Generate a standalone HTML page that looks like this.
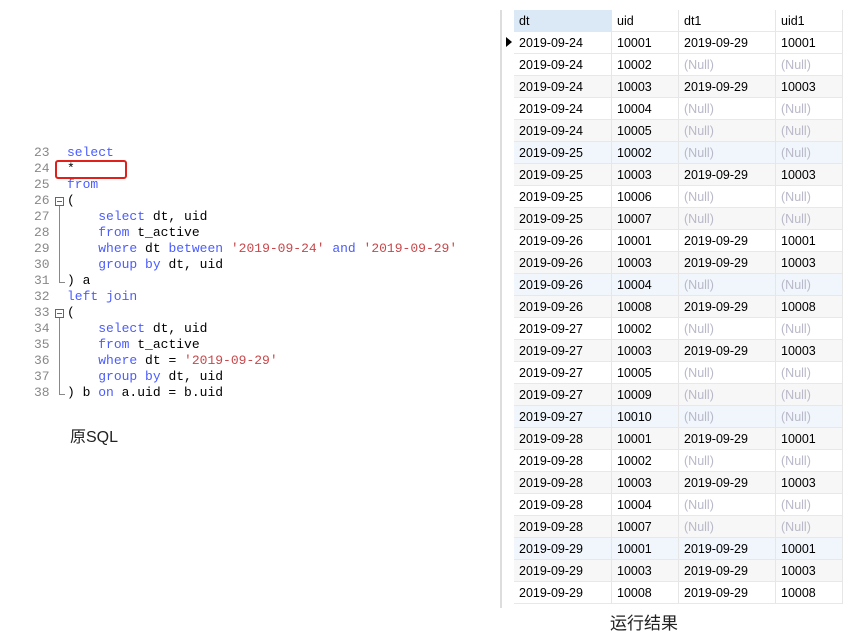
<!DOCTYPE html><html><head><meta charset="utf-8"><style>
body{margin:0;width:849px;height:635px;background:#fff;position:relative;overflow:hidden;font-family:"Liberation Sans","Noto Sans CJK SC",sans-serif}
.code{position:absolute;left:0;top:145px;font:13px/16px "Liberation Mono",monospace;color:#000}
.ln{position:absolute;left:34px;color:#888;width:20px}
.l{position:absolute;left:67px;white-space:pre}
.k{color:#4a5cff}.s{color:#c9474a}
.box{position:absolute;left:55px;top:160px;width:72px;height:19px;border:2px solid #e0201a;border-radius:3px;box-sizing:border-box}
.tbl{position:absolute;left:500px;top:10px;width:341px;border-left:2px solid #ddd;height:598px}
.r{position:absolute;left:12px;height:22px;width:329px;font-size:12.5px;line-height:22px;border-bottom:1px solid #e8e8e8;box-sizing:border-box}
.c{position:absolute;top:0;height:22px;padding-left:5px;border-right:1px solid #e6e6e6;box-sizing:border-box}
.n{color:#b8b8c8}
</style></head><body>
<div class="code" id="code"></div>
<div class="box"></div>
<div style="position:absolute;left:70px;top:423px;font-size:16px;color:#222">原SQL</div>
<div class="tbl" id="t"></div>
<div style="position:absolute;left:610px;top:609px;font-size:17px;color:#222">运行结果</div>
<script>
var L=[['select','k'],['*',''],['from','k'],['(',''],
['    <span class=k>select</span> dt, uid'],['    <span class=k>from</span> t_active'],
["    <span class=k>where</span> dt <span class=k>between</span> <span class=s>'2019-09-24'</span> <span class=k>and</span> <span class=s>'2019-09-29'</span>"],
['    <span class=k>group by</span> dt, uid'],[') a'],['<span class=k>left join</span>'],['('],
['    <span class=k>select</span> dt, uid'],['    <span class=k>from</span> t_active'],
["    <span class=k>where</span> dt = <span class=s>'2019-09-29'</span>"],['    <span class=k>group by</span> dt, uid'],
[') b <span class=k>on</span> a.uid = b.uid']];
var h='';L.forEach(function(x,i){var y=i*16;var t=x[1]==='k'?'<span class=k>'+x[0]+'</span>':x[0];
h+='<div class=ln style="top:'+y+'px">'+(23+i)+'</div><div class=l style="top:'+y+'px">'+t+'</div>';});
h+='<div style="position:absolute;left:55px;top:52px;width:9px;height:9px;border:1px solid #666;box-sizing:border-box"></div><div style="position:absolute;left:57px;top:56px;width:5px;height:1px;background:#666"></div>';
h+='<div style="position:absolute;left:59px;top:61px;width:1px;height:76px;border-left:1px solid #888"></div><div style="position:absolute;left:59px;top:137px;width:6px;border-top:1px solid #888"></div>';
h+='<div style="position:absolute;left:55px;top:164px;width:9px;height:9px;border:1px solid #666;box-sizing:border-box"></div><div style="position:absolute;left:57px;top:168px;width:5px;height:1px;background:#666"></div>';
h+='<div style="position:absolute;left:59px;top:173px;width:1px;height:76px;border-left:1px solid #888"></div><div style="position:absolute;left:59px;top:249px;width:6px;border-top:1px solid #888"></div>';
document.getElementById('code').innerHTML=h;
var D=[['24','10001',1],['24','10002',0],['24','10003',1],['24','10004',0],['24','10005',0],['25','10002',0],['25','10003',1],['25','10006',0],['25','10007',0],['26','10001',1],['26','10003',1],['26','10004',0],['26','10008',1],['27','10002',0],['27','10003',1],['27','10005',0],['27','10009',0],['27','10010',0],['28','10001',1],['28','10002',0],['28','10003',1],['28','10004',0],['28','10007',0],['29','10001',1],['29','10003',1],['29','10008',1]];
var W=[[0,98],[98,67],[165,97],[262,67]];
function row(y,cells,bg,cls){var s='<div class=r style="top:'+y+'px;background:'+bg+'">';cells.forEach(function(c,i){s+='<div class="c '+(cls[i]||'')+'" style="left:'+W[i][0]+'px;width:'+W[i][1]+'px">'+c+'</div>'});return s+'</div>';}
var t=row(0,['dt','uid','dt1','uid1'],'#fff',[]).replace('class="c " style="left:0px','class="c " style="background:#dbe9f7;left:0px');
var blue={5:1,11:1,17:1,23:1};
D.forEach(function(d,i){var bg=blue[i]?'#f0f6fc':(i%2==1||i==0?'#fff':'#f7f7f7');
var c=d[2]?['2019-09-'+d[0],d[1],'2019-09-29',d[1]]:['2019-09-'+d[0],d[1],'(Null)','(Null)'];
t+=row(22+i*22,c,bg,d[2]?[]:['','','n','n']);});
t+='<div style="position:absolute;left:4px;top:27px;width:0;height:0;border-top:5px solid transparent;border-bottom:5px solid transparent;border-left:6px solid #000"></div>';
document.getElementById('t').innerHTML=t;
</script></body></html>
